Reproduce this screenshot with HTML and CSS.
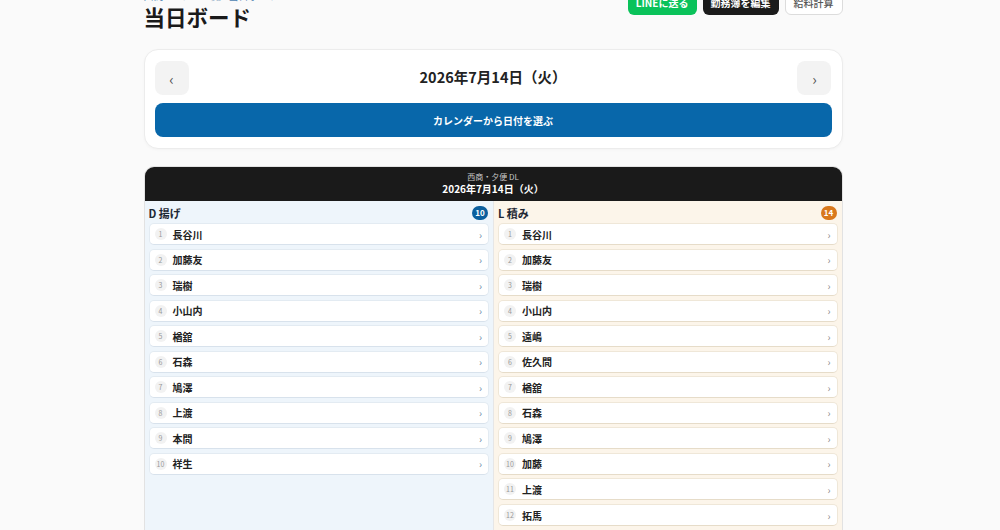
FILE: index.html
```html
<!DOCTYPE html>
<html lang="ja">
  <head>
    <meta charset="UTF-8" />
    <meta name="viewport" content="width=device-width, initial-scale=1.0" />
    <title>当日ボード</title>
    <link rel="stylesheet" href="styles.css">
  </head>
  <body>
    <div class="page">
      <!-- Cabecera -->
      <div class="top">
        <div>
          <div class="crumbs"><span>西商</span> › <span class="dim">シフト一覧</span> › <span>当日ボード</span></div>
          <h1>当日ボード</h1>
        </div>
        <div class="acciones">
          <button class="btn verde">LINEに送る</button>
          <button class="btn negro">勤務簿を編集</button>
          <button class="btn blanco">給料計算</button>
        </div>
      </div>

      <!-- Fecha -->
      <div class="fecha-card">
        <div class="nav">
          <button class="flecha">‹</button>
          <div class="fecha">2026年7月14日（火）</div>
          <button class="flecha">›</button>
        </div>
        <button class="calendario">カレンダーから日付を選ぶ</button>
      </div>

      <!-- Tablero -->
      <div class="tablero">
        <div class="tablero-cab">
          <div class="sub">西商・夕便 DL</div>
          <div class="dia">2026年7月14日（火）</div>
        </div>
        <div class="columnas">
          <div class="col azul">
            <div class="col-cab"><span>D 揚げ</span><span class="badge">10</span></div>
            <div class="lista" id="listaD"></div>
          </div>
          <div class="col crema">
            <div class="col-cab"><span>L 積み</span><span class="badge">14</span></div>
            <div class="lista" id="listaL"></div>
          </div>
        </div>
      </div>
    </div>

    <script>
      const listaD = ["長谷川", "加藤友", "瑞樹", "小山内", "楢舘", "石森", "鳩澤", "上渡", "本間", "祥生"];
      const listaL = ["長谷川", "加藤友", "瑞樹", "小山内", "遠嶋", "佐久間", "楢舘", "石森", "鳩澤", "加藤", "上渡", "拓馬", "本間", "祥生"];

      function pintar(id, nombres) {
        const contenedor = document.getElementById(id);
        nombres.forEach((nombre, i) => {
          const div = document.createElement("div");
          div.className = "fila";
          div.innerHTML = `
            <span class="num">${i + 1}</span>
            <span class="nombre">${nombre}</span>
            <span class="chev">›</span>
          `;
          contenedor.appendChild(div);
        });
      }

      pintar("listaD", listaD);
      pintar("listaL", listaL);
    </script>
  </body>
</html>
```

FILE: styles.css
```css
* {
  box-sizing: border-box;
  margin: 0;
  padding: 0;
  font-family: 'Noto Sans CJK JP', 'Noto Sans', sans-serif;
}
body {
  background: #fafafa;
  padding-right: 14px;
  color: #1d1d1f;
}

.page {
  max-width: 699px;
  margin: -11px auto 0;
}

.top {
  display: flex;
  justify-content: space-between;
  align-items: flex-start;
  margin-bottom: 17px;
}

.crumbs {
  font-size: 10px;
  line-height: 13px;
  color: #b5c4d2;
}
.crumbs span {
  color: #4c7fb0;
}
.crumbs .dim {
  color: #9fb6cc;
}

h1 {
  font-size: 21.5px;
  line-height: 30px;
  font-weight: 700;
  color: #1a1a1a;
}

.acciones {
  display: flex;
  gap: 6px;
}

.btn {
  height: 26px;
  padding: 0 8px;
  border: none;
  border-radius: 6px;
  font-size: 10px;
  font-weight: 700;
  cursor: pointer;
}
.verde {
  background: #0ac25a;
  color: white;
}
.negro {
  background: #1b1b1b;
  color: white;
}
.blanco {
  background: white;
  color: #555;
  border: 1px solid #dcdcdc;
  font-weight: 500;
}

.fecha-card {
  background: white;
  border: 1px solid #ececec;
  border-radius: 14px;
  padding: 11px 10px 11px;
  box-shadow: 0 1px 3px rgba(0, 0, 0, 0.03);
  margin-bottom: 17px;
}

.nav {
  display: flex;
  align-items: center;
  justify-content: space-between;
  margin-bottom: 8px;
}

.flecha {
  width: 34px;
  height: 34px;
  border: none;
  border-radius: 8px;
  background: #f3f3f3;
  color: #555;
  font-size: 15px;
  cursor: pointer;
}

.fecha {
  font-size: 14.5px;
  line-height: 20px;
  font-weight: 700;
  color: #222;
  padding-bottom: 2px;
}

.calendario {
  width: 100%;
  height: 34px;
  border: none;
  border-radius: 8px;
  background: #0867aa;
  color: white;
  font-size: 10px;
  font-weight: 700;
  cursor: pointer;
}

.tablero {
  border: 1px solid #e2e2e2;
  border-radius: 10px;
  overflow: hidden;
  background: white;
}

.tablero-cab {
  background: #1a1a1a;
  color: white;
  text-align: center;
  height: 34px;
  padding-top: 4px;
}
.tablero-cab .sub {
  font-size: 8px;
  line-height: 11px;
  color: #c8c8c8;
}
.tablero-cab .dia {
  font-size: 10px;
  line-height: 14px;
  font-weight: 700;
}

.columnas {
  display: grid;
  grid-template-columns: 1fr 1fr;
}

.col {
  padding: 3px 4px 20px;
}
.azul {
  background: #eef5fb;
}
.crema {
  background: #fcf5ea;
  border-left: 1px solid #e6e6e6;
}

.col-cab {
  display: flex;
  justify-content: space-between;
  align-items: center;
  height: 17px;
  padding: 0 1px 0 0;
  margin-bottom: 2px;
  font-size: 11px;
  font-weight: 700;
  color: #1d2733;
}

.badge {
  min-width: 16px;
  height: 14px;
  padding: 0 3px;
  border-radius: 7px;
  font-size: 8px;
  line-height: 14px;
  text-align: center;
  color: white;
}
.azul .badge {
  background: #0b5f9e;
}
.crema .badge {
  background: #d9781c;
}

.lista {
  display: flex;
  flex-direction: column;
  gap: 3.55px;
}

.fila {
  display: flex;
  align-items: center;
  gap: 6px;
  height: 22px;
  padding: 0 6px 0 5px;
  background: white;
  border-radius: 5px;
}
.azul .fila {
  border: 1px solid #e3ebf2;
  border-bottom-color: #d8e2ec;
}
.crema .fila {
  border: 1px solid #efe7d8;
  border-bottom-color: #e6dcc9;
}

.num {
  width: 12px;
  height: 12px;
  border-radius: 50%;
  background: #f2f2f2;
  color: #999;
  font-size: 7px;
  line-height: 12px;
  text-align: center;
}

.nombre {
  flex: 1;
  font-size: 10px;
  font-weight: 700;
  color: #222;
}

.chev {
  font-size: 10px;
  color: #6c8aa6;
}
.crema .chev {
  color: #8a8a8a;
}
```
